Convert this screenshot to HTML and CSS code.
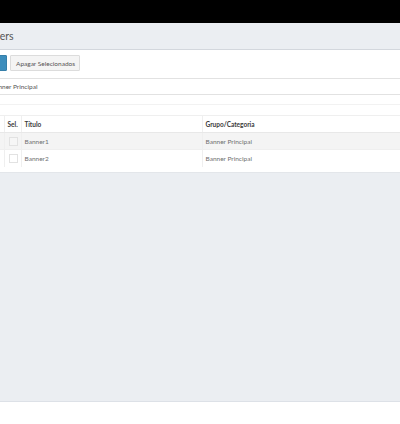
FILE: index.html
```html
<!DOCTYPE html>
<html>
<head>
<meta charset="utf-8">
<link rel="stylesheet" href="styles.css">
</head>
<body>
<div class="topbar"></div>
<div class="titlebar"><h1 class="title">Banners</h1></div>
<div class="panel">
  <div class="toolbar">
    <button class="btn btn-primary">Novo</button>
    <button class="btn btn-default">Apagar Selecionados</button>
  </div>
  <div class="filter"><span class="filter-text">Banner Principal</span></div>
  <div class="spacer"></div>
  <table class="grid">
    <colgroup>
      <col class="c-id"><col class="c-sel"><col class="c-title"><col class="c-group">
    </colgroup>
    <thead>
      <tr><th></th><th>Sel.</th><th>Título</th><th>Grupo/Categoria</th></tr>
    </thead>
    <tbody>
      <tr class="odd"><td></td><td><span class="check"></span></td><td>Banner1</td><td>Banner Principal</td></tr>
      <tr><td></td><td><span class="check"></span></td><td>Banner2</td><td>Banner Principal</td></tr>
    </tbody>
  </table>
</div>
<div class="pagebg"></div>
</body>
</html>
```

FILE: styles.css
```css
html, body {
  margin: 0;
  padding: 0;
  background: #fff;
  overflow: hidden;
  width: 400px;
  height: 424px;
}
body {
  font-family: Lato, "Open Sans", sans-serif;
  color: #333;
}
.topbar {
  height: 23px;
  background: #000;
}
.titlebar {
  height: 26px;
  background: #ebeef2;
  border-bottom: 1px solid #d3d7dd;
  display: flex;
  align-items: center;
}
.title {
  margin: 0 0 0 -24px;
  font-size: 10.5px;
  font-weight: 400;
  color: #555;
  white-space: nowrap;
}
.panel {
  background: #fff;
  padding-bottom: 5px;
  border-bottom: 1px solid #e3e6ea;
}
.toolbar {
  display: flex;
  gap: 3px;
  padding-top: 5px;
  height: 16px;
  padding-bottom: 7px;
  border-bottom: 1px solid #e2e2e2;
}
.btn {
  margin: 0;
  height: 16px;
  font-family: Lato, "Open Sans", sans-serif;
  font-size: 6.5px;
  border-radius: 1px;
  padding: 0 5px;
  white-space: nowrap;
}
.btn-primary {
  width: 32px;
  margin-left: -25px;
  background: #3c8dbc;
  border: 1px solid #367fa9;
  color: #fff;
}
.btn-default {
  background: #f4f4f4;
  border: 1px solid #dcdcdc;
  color: #555;
  width: 70px;
}
.filter {
  height: 15px;
  display: flex;
  align-items: center;
  border-bottom: 1px solid #e2e2e2;
}
.filter-text {
  margin-left: -9px;
  font-size: 6.5px;
  color: #555;
  white-space: nowrap;
}
.spacer {
  height: 9px;
  border-bottom: 1px solid #f2f2f2;
  margin-bottom: 10px;
}
.grid {
  border-collapse: collapse;
  margin-left: -16px;
  width: 416px;
  table-layout: fixed;
  font-size: 6.5px;
}
.c-id { width: 20px; }
.c-sel { width: 17px; }
.c-title { width: 181px; }
.grid th, .grid td {
  height: 17px;
  padding: 0 0 0 3px;
  text-align: left;
  border-top: 1px solid #efefef;
  border-left: 1px solid #efefef;
  box-sizing: border-box;
  white-space: nowrap;
}
.grid th:first-child, .grid td:first-child { border-left: none; }
.grid th {
  font-weight: 700;
  color: #3a3a3a;
  border-bottom: 1px solid #e8e8e8;
}
.grid td { color: #707070; }
.grid tr.odd td { background: #f4f4f4; }
.check {
  display: block;
  width: 7px;
  height: 7px;
  border: 1px solid #e2e2e2;
  background: #fff;
  margin-left: 1px;
}
.grid tr.odd .check { background: #f6f6f6; }
.pagebg {
  height: 228px;
  background: #ebeef2;
  border-bottom: 1px solid #dde1e7;
}
```
